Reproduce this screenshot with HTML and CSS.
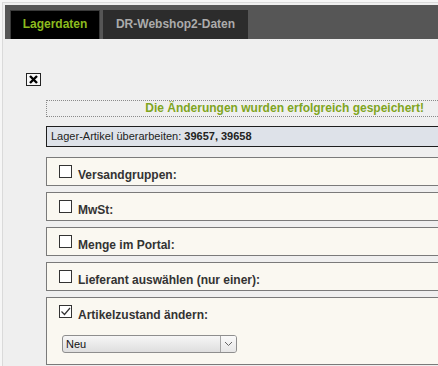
FILE: index.html
```html
<!DOCTYPE html>
<html lang="de">
<head>
    <meta charset="UTF-8">
    <title>Lagerdaten</title>
    <link rel="stylesheet" href="styles.css">
</head>
<body>
    <div class="frame">
        <div class="tabbar">
            <div class="tab active">Lagerdaten</div>
            <div class="tab">DR-Webshop2-Daten</div>
        </div>

        <div class="content">
            <div class="close-box">
                <svg width="9" height="9" viewBox="0 0 9 9"><path d="M1 1 L8 8 M8 1 L1 8" stroke="#000" stroke-width="2.4"/></svg>
            </div>

            <div class="panel">
                <div class="message">Die Änderungen wurden erfolgreich gespeichert!</div>
                <div class="article-head">Lager-Artikel überarbeiten: <b>39657, 39658</b></div>

                <div class="section">
                    <div class="row"><span class="check"></span><span class="label">Versandgruppen:</span></div>
                </div>
                <div class="section">
                    <div class="row"><span class="check"></span><span class="label">MwSt:</span></div>
                </div>
                <div class="section">
                    <div class="row"><span class="check"></span><span class="label">Menge im Portal:</span></div>
                </div>
                <div class="section">
                    <div class="row"><span class="check"></span><span class="label">Lieferant auswählen (nur einer):</span></div>
                </div>
                <div class="section last">
                    <div class="row">
                        <span class="check">
                            <svg width="11" height="11" viewBox="0 0 11 11"><path d="M1.5 5.5 L4.5 8.5 L10 2" fill="none" stroke="#333" stroke-width="1.2"/></svg>
                        </span>
                        <span class="label">Artikelzustand ändern:</span>
                    </div>
                    <div class="select">
                        <span class="select-text">Neu</span>
                        <span class="select-btn">
                            <svg width="9" height="6" viewBox="0 0 9 6"><path d="M1 1 L4.5 4.5 L8 1" fill="none" stroke="#666" stroke-width="1"/></svg>
                        </span>
                    </div>
                </div>
            </div>
        </div>
    </div>
</body>
</html>
```

FILE: styles.css
```css
html, body {
    overflow: hidden;
}
body {
    margin: 0;
    background: #f6f6f6;
    font-family: "Liberation Sans", Arial, sans-serif;
    font-size: 11px;
    color: #333;
}
.frame {
    box-sizing: border-box;
    width: 436px;
    height: 364px;
    margin: 2px 0 0 2px;
    border: 1px solid #dadada;
    border-right: none;
    border-bottom: none;
    padding: 2px 0 0 2px;
    overflow: hidden;
    background: #efefef;
}
.tabbar {
    display: flex;
    gap: 3px;
    height: 29px;
    padding: 5px 0 0 5px;
    background: #565656;
}
.tab {
    width: 145px;
    height: 29px;
    line-height: 29px;
    text-align: center;
    font-size: 12px;
    font-weight: bold;
    color: #ababab;
    background: #2c2c2c;
}
.tab.active {
    box-sizing: border-box;
    width: 90px;
    border: 1px solid #3a3a3a;
    border-bottom: none;
    line-height: 27px;
    color: #8cbb1e;
    background: #000;
}
.content {
    padding: 34px 0 0 21px;
}
.close-box {
    display: flex;
    align-items: center;
    justify-content: center;
    width: 13px;
    height: 11px;
    border: 1px solid #222;
    background: #f8f8f8;
}
.panel {
    width: 404px;
    margin: 14px 0 0 20px;
}
.message {
    border: 1px dotted #8a8a8a;
    padding: 0 25px 0 0;
    line-height: 15px;
    text-align: right;
    font-size: 12px;
    font-weight: bold;
    color: #7fa51f;
}
.article-head {
    margin-top: 9px;
    border: 1px solid #1e1e1e;
    border-right: none;
    padding: 3px 4px;
    line-height: 13px;
    color: #222;
    background: #dee2e9;
}
.section {
    margin-top: 10px;
    border: 1px solid #7a7a7a;
    border-right: none;
    padding: 7px 0 3px 12px;
    background: #faf8f1;
}
.section + .section {
    margin-top: 6px;
}
.section.last {
    padding-bottom: 11px;
}
.row {
    display: flex;
    align-items: flex-start;
}
.check {
    display: flex;
    align-items: center;
    justify-content: center;
    box-sizing: border-box;
    width: 13px;
    height: 13px;
    border: 1px solid #333;
    background: #fff;
}
.label {
    margin: 3px 0 0 6px;
    line-height: 14px;
    font-size: 12px;
    font-weight: bold;
    color: #333;
}
.select {
    display: flex;
    align-items: stretch;
    box-sizing: border-box;
    width: 175px;
    height: 18px;
    margin: 13px 0 0 3px;
    border: 1px solid #8e8e8e;
    border-radius: 3px;
    background: linear-gradient(#f6f6f6, #dedede);
}
.select-text {
    flex: 1;
    padding-left: 3px;
    line-height: 16px;
    color: #111;
}
.select-btn {
    display: flex;
    align-items: center;
    justify-content: center;
    width: 15px;
    border-left: 1px solid #a5a5a5;
    border-radius: 0 2px 2px 0;
    background: linear-gradient(#fafafa, #e6e6e6);
}
```
